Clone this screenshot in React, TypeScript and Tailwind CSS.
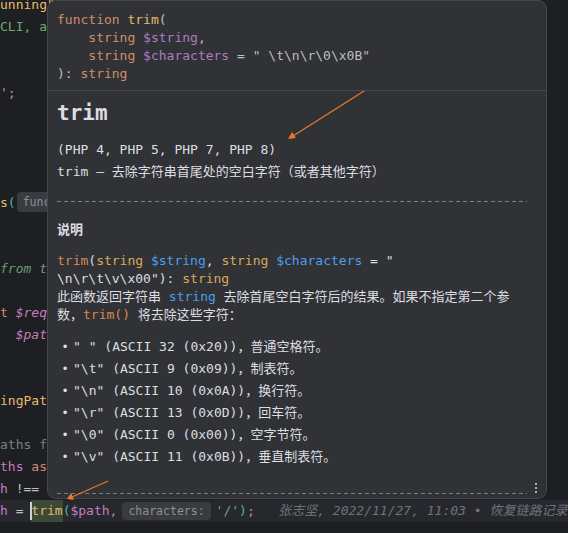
const mono = "font-['DejaVu_Sans_Mono','Noto_Sans_CJK_SC',monospace]";

const C = {
  kw: "text-[#cf8e6d]",
  fn: "text-[#e8ba6b]",
  purple: "text-[#c77dbb]",
  text: "text-[#bcbec4]",
  green: "text-[#6aab73]",
  brace: "text-[#4fb3a6]",
  gray: "text-[#7a7e85]",
};

function Hint({ children }: { children: React.ReactNode }) {
  return (
    <span className="mx-[5px] inline-block rounded-[4px] bg-[#393b40] px-[6px] text-[11.5px] leading-[18px] text-[#8c8f94]">
      {children}
    </span>
  );
}

function Line({ children, className = "" }: { children?: React.ReactNode; className?: string }) {
  return <div className={`h-[22px] whitespace-pre leading-[22px] ${className}`}>{children}</div>;
}

function Editor() {
  return (
    <div className={`-mt-[6px] flex flex-col text-[13px] ${mono}`}>
      <Line>
        <span className={C.fn}>unning"</span>
      </Line>
      <Line>
        <span className={C.green}>CLI, a</span>
      </Line>
      <Line />
      <Line />
      <Line>
        <span className={C.kw}>';</span>
      </Line>
      <Line />
      <Line />
      <Line />
      <Line />
      <Line>
        <span className={C.fn}>s</span>
        <span className={C.brace}>(</span>
        <span className="ml-[1px] inline-block w-[30px] overflow-hidden rounded-l-[4px] bg-[#393b40] pl-[6px] align-top text-[11.5px] leading-[20px] text-[#8c8f94]">
          func
        </span>
      </Line>
      <Line />
      <Line />
      <Line>
        <span className="italic text-[#6a9a6f]">from t</span>
      </Line>
      <Line />
      <Line>
        <span className={C.kw}>t </span>
        <span className={`italic ${C.purple}`}>$req</span>
      </Line>
      <Line>
        <span className={`italic ${C.purple}`}>  $pat</span>
      </Line>
      <Line />
      <Line />
      <Line>
        <span className={C.fn}>ingPat</span>
      </Line>
      <Line />
      <Line>
        <span className={C.gray}>aths f</span>
      </Line>
      <Line>
        <span className={C.purple}>ths </span>
        <span className={C.kw}>as</span>
      </Line>
      <Line>
        <span className={C.purple}>h </span>
        <span className={C.text}>!==</span>
      </Line>
      <Line className="relative bg-[#26282e]">
        <span className={C.purple}>h</span>
        <span className={C.text}> = </span>
        <span className="relative inline-block bg-[#3a4a37]">
          <span className="absolute -left-[1px] top-[2px] h-[18px] w-[2px] bg-[#cfd1d6]" />
          <span className={C.fn}>trim</span>
        </span>
        <span className={C.brace}>(</span>
        <span className={C.purple}>$path</span>
        <span className={C.kw}>,</span>
        <Hint>characters:</Hint>
        <span className={C.green}>'/'</span>
        <span className={C.brace}>)</span>
        <span className={C.kw}>;</span>
        <span className="italic text-[#6f737a]">   张志坚, 2022/11/27, 11:03 • 恢复链路记录</span>
      </Line>
    </div>
  );
}

const dashed =
  "h-px w-[470px] bg-[repeating-linear-gradient(to_right,#7a7d83_0_4px,transparent_4px_7px)]";

const items = [
  ['" "', "(ASCII 32 (0x20))", "，普通空格符。"],
  ['"\\t"', "(ASCII 9 (0x09))", "，制表符。"],
  ['"\\n"', "(ASCII 10 (0x0A))", "，换行符。"],
  ['"\\r"', "(ASCII 13 (0x0D))", "，回车符。"],
  ['"\\0"', "(ASCII 0 (0x00))", "，空字节符。"],
  ['"\\v"', "(ASCII 11 (0x0B))", "，垂直制表符。"],
];

function Popup() {
  const dt = "text-[#dcdee3]";
  return (
    <div
      className={`absolute left-[47px] top-0 h-[499px] w-[500px] overflow-hidden rounded-[9px] border border-[#45474c] bg-[#313236] text-[13px] ${mono}`}
    >
      <div className="px-[9px] pb-[7px] pt-[10px] leading-[18px] whitespace-pre">
        <div>
          <span className="text-[#cf8e6d]">function </span>
          <span className="text-[#e8b96c]">trim</span>
          <span className={C.text}>(</span>
        </div>
        <div>
          <span className="text-[#cf8e6d]">    string </span>
          <span className="text-[#a87fc0]">$string</span>
          <span className={C.text}>,</span>
        </div>
        <div>
          <span className="text-[#cf8e6d]">    string </span>
          <span className="text-[#a87fc0]">$characters</span>
          <span className={C.text}> = " \t\n\r\0\x0B"</span>
        </div>
        <div>
          <span className={C.text}>): </span>
          <span className="text-[#cf8e6d]">string</span>
        </div>
      </div>
      <div className="h-px bg-[#45474c]" />

      <div className="px-[9px]">
        <div className={`mt-[8px] text-[21px] font-bold leading-[28px] ${dt}`}>trim</div>
        <div className={`mt-[12px] leading-[22px] ${dt}`}>(PHP 4, PHP 5, PHP 7, PHP 8)</div>
        <div className={`leading-[22px] ${dt}`}>trim – 去除字符串首尾处的空白字符（或者其他字符）</div>
        <div className={`mt-[18px] ${dashed}`} />

        <div className={`mt-[19px] font-bold leading-[18px] ${dt}`}>说明</div>

        <div className="mt-[13px] whitespace-pre leading-[18px]">
          <div>
            <span className="text-[#d48a4f]">trim</span>
            <span className={dt}>(</span>
            <span className="text-[#d9ab58]">string </span>
            <span className="text-[#4a9ff0]">$string</span>
            <span className={dt}>, </span>
            <span className="text-[#d9ab58]">string </span>
            <span className="text-[#4a9ff0]">$characters</span>
            <span className={dt}> = "</span>
          </div>
          <div>
            <span className={dt}>\n\r\t\v\x00"): </span>
            <span className="text-[#d9ab58]">string</span>
          </div>
          <div>
            <span className={dt}>此函数返回字符串 </span>
            <span className="text-[#4a9ff0]">string</span>
            <span className={dt}> 去除首尾空白字符后的结果。如果不指定第二个参</span>
          </div>
          <div>
            <span className={dt}>数，</span>
            <span className="text-[#d48a4f]">trim()</span>
            <span className={dt}> 将去除这些字符：</span>
          </div>
        </div>

        <div className="mt-[12px] flex flex-col">
          {items.map(([a, b, c]) => (
            <div key={b} className={`flex h-[22px] items-center whitespace-pre leading-[22px] ${dt}`}>
              <span className="w-[16px] text-center text-[12px]">•</span>
              <span>
                {a} {b}
                {c}
              </span>
            </div>
          ))}
        </div>

        <div className={`mt-[25px] ${dashed}`} />
      </div>

      <div className="absolute bottom-[5px] right-[9px] flex flex-col gap-[2px]">
        <span className="h-[2px] w-[2px] rounded-full bg-[#d4d6db]" />
        <span className="h-[2px] w-[2px] rounded-full bg-[#d4d6db]" />
        <span className="h-[2px] w-[2px] rounded-full bg-[#d4d6db]" />
      </div>
    </div>
  );
}

function Arrows() {
  return (
    <svg className="pointer-events-none absolute left-0 top-0" width="568" height="533">
      <line x1="364" y1="91" x2="293" y2="136" stroke="#e8782a" strokeWidth="1.3" />
      <polygon points="288,139 292,132 296,138" fill="#e8782a" />
      <line x1="108" y1="481" x2="72" y2="497" stroke="#e8782a" strokeWidth="1.3" />
      <polygon points="67,499 71,493 74,500" fill="#e8782a" />
    </svg>
  );
}

export default function App() {
  return (
    <div className="relative h-[533px] w-[568px] overflow-hidden bg-[#1e1f22]">
      <Editor />
      <Popup />
      <Arrows />
    </div>
  );
}
